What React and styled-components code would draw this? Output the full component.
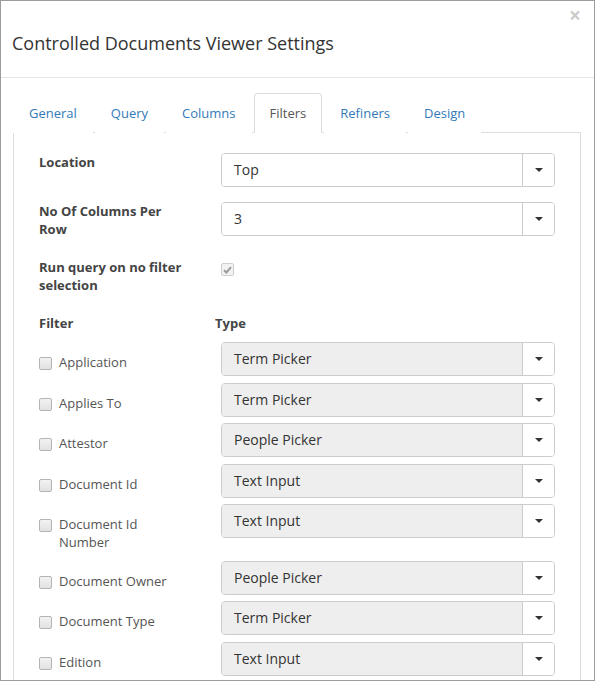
import React from 'react';
import styled, { createGlobalStyle } from 'styled-components';

const GlobalStyle = createGlobalStyle`
  html, body {
    margin: 0;
    padding: 0;
    background: #fff;
  }
  * {
    box-sizing: border-box;
  }
`;

const tabs = ['General', 'Query', 'Columns', 'Filters', 'Refiners', 'Design'];

const filters = [
    { name: 'Application', type: 'Term Picker' },
    { name: 'Applies To', type: 'Term Picker' },
    { name: 'Attestor', type: 'People Picker' },
    { name: 'Document Id', type: 'Text Input' },
    { name: 'Document Id Number', type: 'Text Input' },
    { name: 'Document Owner', type: 'People Picker' },
    { name: 'Document Type', type: 'Term Picker' },
    { name: 'Edition', type: 'Text Input' },
];

const Select = ({ value, $muted }) => (
    <SelectBox>
        <SelectValue $muted={$muted}>{value}</SelectValue>
        <SelectButton>
            <Caret />
        </SelectButton>
    </SelectBox>
);

const Checkbox = ({ checked, disabled }) => (
    <CheckBox $disabled={disabled}>
        {checked && (
            <svg width="9" height="8" viewBox="0 0 9 8">
                <path d="M1 4.2 L3.4 6.5 L8 1.2" fill="none" stroke="#9a9a9a" strokeWidth="2" />
            </svg>
        )}
    </CheckBox>
);

const App = () => {
    return (
        <>
            <GlobalStyle />
            <Dialog>
                <Header>
                    <Title>Controlled Documents Viewer Settings</Title>
                    <Close>×</Close>
                </Header>
                <Body>
                    <TabList>
                        {tabs.map((t) => (
                            <Tab key={t} $active={t === 'Filters'}>{t}</Tab>
                        ))}
                    </TabList>
                    <Panel>
                        <FormRow>
                            <FieldLabel>Location</FieldLabel>
                            <Select value="Top" />
                        </FormRow>
                        <FormRow>
                            <FieldLabel>No Of Columns Per Row</FieldLabel>
                            <Select value="3" />
                        </FormRow>
                        <FormRow $top={5}>
                            <FieldLabel>Run query on no filter selection</FieldLabel>
                            <CheckCell>
                                <Checkbox checked disabled />
                            </CheckCell>
                        </FormRow>

                        <ColumnHeads>
                            <FilterHead>Filter</FilterHead>
                            <span>Type</span>
                        </ColumnHeads>

                        {filters.map((f) => (
                            <FilterRow key={f.name}>
                                <FilterName>
                                    <Checkbox />
                                    <FilterText>{f.name}</FilterText>
                                </FilterName>
                                <Select value={f.type} $muted />
                            </FilterRow>
                        ))}
                    </Panel>
                </Body>
            </Dialog>
        </>
    );
}

export default App;

const Dialog = styled.div`
    width: 595px;
    height: 681px;
    border: 1px solid #9c9c9c;
    overflow: hidden;
    background: #fff;
    color: #333;
    font-family: "Open Sans", "Noto Sans", sans-serif;
`;

const Header = styled.div`
    height: 77px;
    display: flex;
    justify-content: space-between;
    align-items: flex-start;
    padding: 0 13px 0 11px;
    border-bottom: 1px solid #e5e5e5;
`;

const Title = styled.h4`
    margin: 29px 0 0;
    font-size: 18px;
    font-weight: 400;
    line-height: 26px;
    color: #333;
`;

const Close = styled.span`
    margin-top: 4px;
    font-size: 21px;
    font-weight: 700;
    line-height: 1;
    color: #000;
    opacity: 0.2;
`;

const Body = styled.div`
    padding: 15px 13px 0 12px;
`;

const TabList = styled.div`
    display: flex;
    border-bottom: 1px solid #ddd;
`;

const Tab = styled.div`
    margin: 0 2px -1px 0;
    padding: 10px 15px;
    font-size: 13px;
    line-height: 18px;
    border: 1px solid ${(p) => (p.$active ? '#ddd' : 'transparent')};
    border-bottom-color: transparent;
    border-radius: 4px 4px 0 0;
    background: #fff;
    color: ${(p) => (p.$active ? '#555' : '#337ab7')};
`;

const Panel = styled.div`
    border: 1px solid #ddd;
    border-top: 0;
    padding: 20px 25px 0;
`;

const FormRow = styled.div`
    display: flex;
    align-items: flex-start;
    margin-bottom: 15px;
    padding-top: ${(p) => p.$top || 0}px;
`;

const FieldLabel = styled.div`
    width: 182px;
    padding-right: 32px;
    font-size: 13px;
    font-weight: 700;
    line-height: 18px;
    color: #444;
`;

const CheckCell = styled.div`
    padding-top: 5px;
`;

const ColumnHeads = styled.div`
    display: flex;
    margin: 20px 0 10px;
    font-size: 13px;
    font-weight: 700;
    line-height: 18px;
    color: #444;
`;

const FilterHead = styled.span`
    width: 176px;
`;

const FilterRow = styled.div`
    display: flex;
    align-items: flex-start;
    margin-bottom: 6.5px;
`;

const FilterName = styled.div`
    width: 182px;
    display: flex;
    align-items: flex-start;
    padding: 15px 0 0;

    & > span:first-child {
        flex-shrink: 0;
    }
`;

const FilterText = styled.div`
    max-width: 120px;
    margin: -4px 0 0 7px;
    padding-bottom: 3px;
    font-size: 13px;
    line-height: 18px;
    color: #555;
`;

const CheckBox = styled.span`
    width: 13px;
    height: 13px;
    display: flex;
    align-items: center;
    justify-content: center;
    border: 1px solid ${(p) => (p.$disabled ? '#cfcfcf' : '#b4b4b4')};
    border-radius: 2px;
    background: ${(p) => (p.$disabled ? '#f2f2f2' : 'linear-gradient(#f2f2f2, #e2e2e2)')};
`;

const SelectBox = styled.div`
    flex: 1;
    height: 34px;
    display: flex;
    border: 1px solid #ccc;
    border-radius: 4px;
    overflow: hidden;
`;

const SelectValue = styled.div`
    flex: 1;
    padding: 0 12px;
    font-size: 14px;
    line-height: 32px;
    color: #333;
    background: ${(p) => (p.$muted ? '#eee' : '#fff')};
`;

const SelectButton = styled.div`
    width: 32px;
    display: flex;
    align-items: center;
    justify-content: center;
    border-left: 1px solid #ccc;
    background: #fff;
`;

const Caret = styled.span`
    width: 0;
    height: 0;
    border-left: 4px solid transparent;
    border-right: 4px solid transparent;
    border-top: 4px solid #333;
`;
